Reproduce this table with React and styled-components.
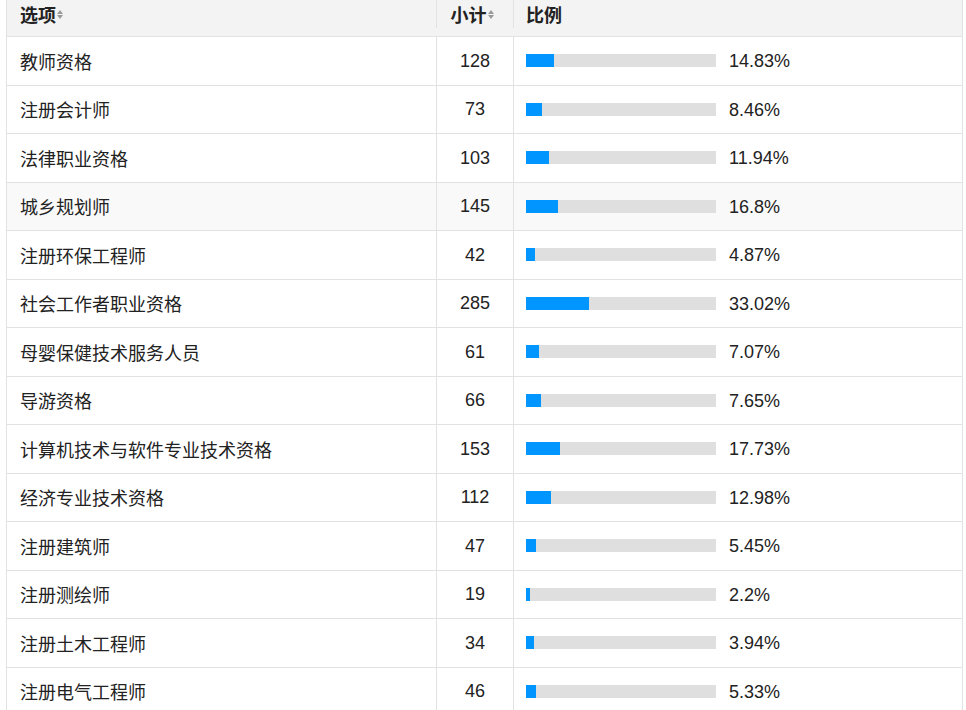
import React from 'react';
import styled, { createGlobalStyle } from 'styled-components';

const GlobalStyle = createGlobalStyle`
  html, body {
    margin: 0;
    padding: 0;
    background: #fff;
    overflow: hidden;
  }
  body {
    font-family: "Liberation Sans", Arial, "Noto Sans CJK SC", sans-serif;
    color: #222;
  }
`;

const rows = [
  { name: '教师资格', count: 128, pct: 14.83 },
  { name: '注册会计师', count: 73, pct: 8.46 },
  { name: '法律职业资格', count: 103, pct: 11.94 },
  { name: '城乡规划师', count: 145, pct: 16.8, hover: true },
  { name: '注册环保工程师', count: 42, pct: 4.87 },
  { name: '社会工作者职业资格', count: 285, pct: 33.02 },
  { name: '母婴保健技术服务人员', count: 61, pct: 7.07 },
  { name: '导游资格', count: 66, pct: 7.65 },
  { name: '计算机技术与软件专业技术资格', count: 153, pct: 17.73 },
  { name: '经济专业技术资格', count: 112, pct: 12.98 },
  { name: '注册建筑师', count: 47, pct: 5.45 },
  { name: '注册测绘师', count: 19, pct: 2.2 },
  { name: '注册土木工程师', count: 34, pct: 3.94 },
  { name: '注册电气工程师', count: 46, pct: 5.33 },
]

const Page = styled.div`
  padding-left: 6px;
  height: 710px;
`

const Table = styled.div`
  width: 957px;
  border-left: 1px solid #e2e2e2;
  border-right: 1px solid #e2e2e2;
  box-sizing: border-box;
  font-size: 18px;
`

const Row = styled.div`
  display: grid;
  grid-template-columns: 430px 77px 1fr;
  height: ${p => p.$head ? '37px' : '48.5px'};
  padding-bottom: ${p => p.$head ? '8px' : '0'};
  box-sizing: border-box;
  border-bottom: 1px solid #e2e2e2;
  background: ${p => p.$head ? '#f3f3f3' : p.$hover ? '#f9f9f9' : '#fff'};
  font-weight: ${p => p.$head ? 'bold' : 'normal'};
`

const Cell = styled.div`
  display: flex;
  align-items: center;
  justify-content: ${p => p.$center ? 'center' : 'flex-start'};
  padding-left: ${p => p.$pad || 0}px;
  padding-right: ${p => p.$padRight || 0}px;
  padding-top: ${p => p.$top ? '1px' : '0'};
  border-right: ${p => p.$last ? 'none' : '1px solid #e2e2e2'};
  white-space: nowrap;
  overflow: hidden;
`

const Sort = styled.span`
  display: inline-flex;
  flex-direction: column;
  gap: 1px;
  margin-left: 1px;
  margin-top: 1px;
`

const Tri = styled.span`
  width: 0;
  height: 0;
  border-left: 3.5px solid transparent;
  border-right: 3.5px solid transparent;
  ${p => p.$down ? 'border-top: 4px solid #9a9a9a;' : 'border-bottom: 4px solid #9a9a9a;'}
`

const Track = styled.div`
  width: 190px;
  height: 13px;
  background: #dfdfdf;
  display: flex;
`

const Fill = styled.div`
  height: 100%;
  background: #0095ff;
`

const Pct = styled.span`
  margin-left: 13px;
  padding-top: 2px;
`

const SortIcon = () => (
  <Sort>
    <Tri />
    <Tri $down />
  </Sort>
)

export default function App() {
  return (
    <Page>
      <GlobalStyle />
      <Table>
        <Row $head>
          <Cell $pad={13}>选项<SortIcon /></Cell>
          <Cell $center $padRight={6}>小计<SortIcon /></Cell>
          <Cell $pad={12} $last>比例</Cell>
        </Row>
        {rows.map(r => (
          <Row key={r.name} $hover={r.hover}>
            <Cell $pad={13}>{r.name}</Cell>
            <Cell $center $top>{r.count}</Cell>
            <Cell $pad={12} $last>
              <Track>
                <Fill style={{ width: `${(190 * r.pct / 100).toFixed(1)}px` }} />
              </Track>
              <Pct>{r.pct}%</Pct>
            </Cell>
          </Row>
        ))}
      </Table>
    </Page>
  )
}
